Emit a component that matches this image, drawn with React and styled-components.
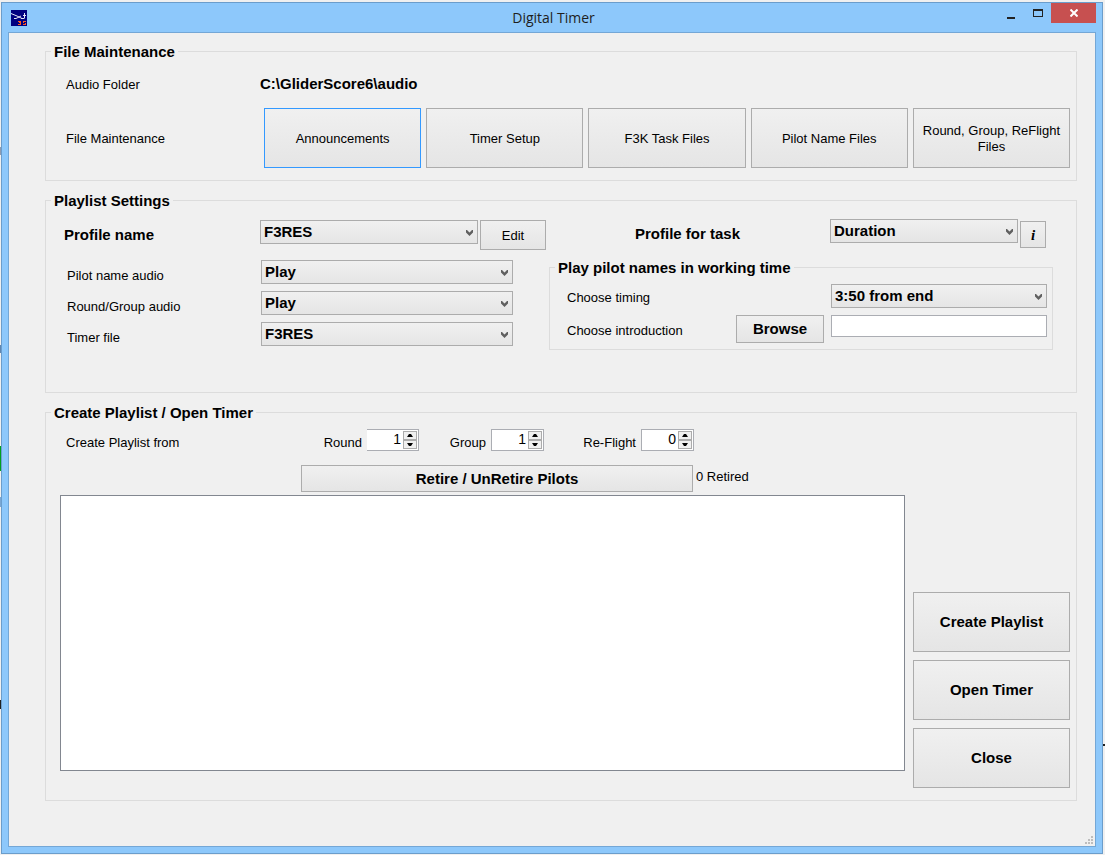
import styled, { createGlobalStyle } from 'styled-components';

const GlobalStyle = createGlobalStyle`
  *, *::before, *::after {
    box-sizing: border-box;
  }

  body {
    margin: 0;
    color: #000000;
    font-family: 'Liberation Sans', Arial, sans-serif;
    font-size: 13px;
    line-height: 16px;
  }

  button, input, select {
    margin: 0;
    font: inherit;
    color: inherit;
    border-radius: 0;
  }
`;

const Desktop = styled.div`
  display: flex;
  min-height: 100vh;
  padding: 2px 2px 1px 1px;
  background-color: #f0f0f0;
  background-image:
    linear-gradient(#00a020, #00a020),
    linear-gradient(#7aa7d4, #7aa7d4),
    linear-gradient(#202020, #202020),
    linear-gradient(#8e9bb0, #8e9bb0),
    linear-gradient(#5f86b0, #5f86b0),
    linear-gradient(#202020, #202020);
  background-size: 1px 25px, 1px 10px, 1px 9px, 1px 8px, 1px 8px, 2px 2px;
  background-position: 0 446px, 0 497px, 0 700px, 0 147px, 0 345px, 100% 744px;
  background-repeat: no-repeat;
`;

const Window = styled.main`
  flex: 1;
  display: flex;
  flex-direction: column;
  padding: 0 6px 6px;
  border: 1px solid #6b9dcb;
  background: #8dc8fb;
`;

const TitleBar = styled.header`
  display: grid;
  grid-template-columns: 1fr auto 1fr;
  align-items: center;
  height: 29px;
  padding-left: 3px;

  svg {
    display: block;
  }
`;

const Title = styled.h1`
  margin: 0;
  color: #1e1e1e;
  font-family: 'Open Sans', 'Noto Sans', sans-serif;
  font-size: 14px;
  font-weight: 400;
  line-height: 20px;
`;

const WindowControls = styled.div`
  display: flex;
  justify-content: flex-end;
  align-self: start;
`;

const ControlButton = styled.button`
  display: flex;
  align-items: center;
  justify-content: center;
  width: ${({ $close }) => ($close ? '45px' : '27px')};
  height: 20px;
  padding: 0;
  border: none;
  background: ${({ $close }) => ($close ? '#c75050' : 'transparent')};
`;

const Client = styled.div`
  position: relative;
  flex: 1;
  display: flex;
  flex-direction: column;
  gap: 12px;
  padding: 11px 18px 40px 36px;
  border: 1px solid #74a7d6;
  background: #f0f0f0;
`;

const Grip = styled.svg`
  position: absolute;
  right: 2px;
  bottom: 2px;
`;

const Group = styled.fieldset`
  min-width: 0;
  margin: 0;
  padding: 0;
  border: 1px solid #dcdcdc;
`;

const GroupTitle = styled.legend`
  margin-left: 5px;
  padding: 0 3px;
  font-size: 15px;
  font-weight: 700;
  line-height: 15px;
`;

const GroupBody = styled.div`
  padding: ${({ $padding }) => $padding};
`;

const FileGrid = styled.div`
  display: grid;
  grid-template-columns: 194px 1fr;
  row-gap: 16px;
  align-items: center;
`;

const FileLabel = styled.span`
  padding-top: 2px;
  line-height: 14px;
`;

const FolderPath = styled.strong`
  font-size: 15px;
`;

const ButtonRow = styled.div`
  display: flex;
  gap: 5px;
  padding-left: 4px;
`;

const Button = styled.button`
  flex: ${({ $width }) => ($width ? `0 1 ${$width}px` : '1 1 0')};
  min-width: 0;
  height: ${({ $height }) => $height || 60}px;
  padding: ${({ $bold }) => ($bold ? '0 4px' : '2px 4px 0')};
  border: 1px solid ${({ $focused }) => ($focused ? '#3399ff' : '#acacac')};
  background: linear-gradient(#f0f0f0, #e5e5e5);
  font-size: ${({ $bold }) => ($bold ? '15px' : '13px')};
  font-weight: ${({ $bold }) => ($bold ? 700 : 400)};
`;

const InfoButton = styled(Button)`
  align-self: flex-end;
  font-family: 'Liberation Serif', 'Times New Roman', serif;
  font-style: italic;
`;

const SettingsGrid = styled.div`
  display: grid;
  grid-template-columns: 482fr 504fr;
  column-gap: 3px;
`;

const Column = styled.div`
  display: flex;
  flex-direction: column;
  min-width: 0;
  padding-top: ${({ $top }) => $top}px;
`;

const ProfileRow = styled.div`
  display: flex;
  align-items: flex-start;
  gap: 2px;
  min-height: 29px;
  padding: ${({ $padding }) => $padding || 0};
`;

const ProfileLabel = styled.label`
  flex: 0 0 ${({ $width }) => $width}px;
  align-self: center;
  font-size: 15px;
  font-weight: 700;
`;

const FieldList = styled.div`
  display: grid;
  gap: 7px;
  margin-top: 10px;
  padding: 0 33px 0 3px;
`;

const FieldRow = styled.div`
  display: grid;
  grid-template-columns: 194px 1fr;
  align-items: center;
`;

const FieldLabel = styled.label`
  padding-top: 8px;
`;

const PilotGroup = styled(Group)`
  margin-top: 12px;
`;

const PilotRow = styled.div`
  display: flex;
  align-items: flex-start;
  gap: 7px;

  & + & {
    margin-top: 7px;
  }

  label {
    flex: 1;
    align-self: center;
    padding-top: 3px;
  }
`;

const SelectBox = styled.div`
  position: relative;
  flex: ${({ $width }) => ($width ? `0 0 ${$width}px` : '1')};
  min-width: 0;

  select {
    display: block;
    width: 100%;
    height: 24px;
    padding: 0 20px 0 3px;
    appearance: none;
    border: 1px solid #acacac;
    background: linear-gradient(#f0f0f0, #e5e5e5);
    font-size: 15px;
    font-weight: 700;
  }

  svg {
    position: absolute;
    top: 10px;
    right: 5px;
    pointer-events: none;
  }
`;

const TextBox = styled.input`
  flex: 0 0 216px;
  min-width: 0;
  height: 22px;
  padding: 0 3px;
  border: 1px solid #abadb3;
  background: #ffffff;
`;

const CounterGrid = styled.div`
  display: grid;
  grid-template-columns: 226px 97px 95px 120px;
  column-gap: 30px;
  padding-left: 20px;
`;

const Counter = styled.div`
  display: flex;
  justify-content: flex-end;
  gap: 5px;
`;

const CounterLabel = styled.span`
  padding-top: 6px;
`;

const Spinner = styled.div`
  display: flex;
  width: ${({ $open }) => ($open ? '52px' : '53px')};
  height: 22px;
  padding: 1px;
  border: 1px solid #abadb3;
  border-left-width: ${({ $open }) => ($open ? 0 : '1px')};
  background: #ffffff;

  input {
    flex: 1;
    min-width: 0;
    padding: 0 2px 2px 0;
    border: none;
    background: transparent;
    font-size: 14px;
    text-align: right;
    appearance: textfield;
  }

  input::-webkit-inner-spin-button {
    appearance: none;
    margin: 0;
  }
`;

const SpinButtons = styled.div`
  display: grid;
  grid-template-rows: 1fr 1fr;
  width: 14px;

  button {
    display: flex;
    align-items: center;
    justify-content: center;
    padding: 0;
    border: 1px solid #acacac;
    background: #f0f0f0;
  }
`;

const RetireRow = styled.div`
  display: flex;
  gap: 3px;
  margin-top: 14px;
  padding-left: 255px;
`;

const RetiredCount = styled.span`
  padding-top: 4px;
`;

const PlaylistArea = styled.div`
  display: flex;
  gap: 8px;
  margin-top: 3px;
  padding: 0 6px 0 14px;
`;

const PlaylistBox = styled.select`
  flex: 1;
  min-width: 0;
  height: 276px;
  border: 1px solid #828790;
  background: #ffffff;
`;

const Actions = styled.div`
  display: grid;
  align-content: end;
  width: 157px;
  height: 293px;
  gap: 8px;
`;

const Logo = () => (
  <svg width="16" height="16" viewBox="0 0 16 16">
    <rect width="16" height="16" fill="#000080" />
    <path d="M0 3.5L6 6l5 2.5M3 8.5h2l5-2.5M10 8.5h3.5M13.5 3v5M12 5.5h3" fill="none" stroke="#e4e4f4" />
    <g fill="#ff5a1f" shapeRendering="crispEdges">
      <path d="M7 11h3v4H7v-1h2v-1H8v-1h1v0H7z" />
      <path d="M12 11h3v1h-2v1h2v2h-3v-1h2v-1h-2z" />
    </g>
  </svg>
);

const Select = ({ id, value, width }) => (
  <SelectBox $width={width}>
    <select id={id} defaultValue={value}>
      <option>{value}</option>
    </select>
    <svg width="7" height="6" viewBox="0 0 7 6">
      <path d="M0 0h1l2.5 2.5L6 0h1v2.5L3.5 6 0 2.5z" fill="#606060" />
    </svg>
  </SelectBox>
);

const NumberField = ({ id, label, value, open }) => (
  <Counter>
    <CounterLabel as="label" htmlFor={id}>{label}</CounterLabel>
    <Spinner $open={open}>
      <input id={id} type="number" defaultValue={value} />
      <SpinButtons>
        <button type="button" aria-label={`${label} up`}>
          <svg width="6" height="3" viewBox="0 0 6 3"><path d="M2 0h2l2 3H0z" /></svg>
        </button>
        <button type="button" aria-label={`${label} down`}>
          <svg width="6" height="3" viewBox="0 0 6 3"><path d="M0 0h6L4 3H2z" /></svg>
        </button>
      </SpinButtons>
    </Spinner>
  </Counter>
);

const fileButtons = ['Announcements', 'Timer Setup', 'F3K Task Files', 'Pilot Name Files', 'Round, Group, ReFlight Files'];

const audioFields = [
  { id: 'pilot-audio', label: 'Pilot name audio', value: 'Play' },
  { id: 'round-audio', label: 'Round/Group audio', value: 'Play' },
  { id: 'timer-file', label: 'Timer file', value: 'F3RES' },
];

const App = () => (
  <>
    <GlobalStyle />
    <Desktop>
      <Window>
        <TitleBar>
          <Logo />
          <Title>Digital Timer</Title>
          <WindowControls>
            <ControlButton aria-label="Minimize">
              <svg width="8" height="14"><path d="M0 11h8v2H0z" fill="#222222" /></svg>
            </ControlButton>
            <ControlButton aria-label="Maximize">
              <svg width="10" height="8" shapeRendering="crispEdges">
                <path d="M0 0h10v8H0zM1 2v5h8V2z" fill="#222222" fillRule="evenodd" />
              </svg>
            </ControlButton>
            <ControlButton $close aria-label="Close window">
              <svg width="8" height="8" viewBox="0 0 8 8">
                <path d="M0.5 0.5l7 7M7.5 0.5l-7 7" stroke="#ffffff" strokeWidth="2" />
              </svg>
            </ControlButton>
          </WindowControls>
        </TitleBar>

        <Client>
          {/* File maintenance */}
          <Group>
            <GroupTitle>File Maintenance</GroupTitle>
            <GroupBody $padding="17px 6px 12px 20px">
              <FileGrid>
                <FileLabel>Audio Folder</FileLabel>
                <FolderPath>C:\GliderScore6\audio</FolderPath>
                <FileLabel>File Maintenance</FileLabel>
                <ButtonRow>
                  {fileButtons.map((text, i) => (
                    <Button key={text} type="button" $focused={i === 0}>{text}</Button>
                  ))}
                </ButtonRow>
              </FileGrid>
            </GroupBody>
          </Group>

          {/* Playlist settings */}
          <Group>
            <GroupTitle>Playlist Settings</GroupTitle>
            <GroupBody $padding="0 23px 42px 18px">
              <SettingsGrid>
                <Column $top={12}>
                  <ProfileRow>
                    <ProfileLabel htmlFor="profile" $width={194}>Profile name</ProfileLabel>
                    <Select id="profile" value="F3RES" />
                    <Button type="button" $width={66} $height={30}>Edit</Button>
                  </ProfileRow>
                  <FieldList>
                    {audioFields.map(({ id, label, value }) => (
                      <FieldRow key={id}>
                        <FieldLabel htmlFor={id}>{label}</FieldLabel>
                        <Select id={id} value={value} />
                      </FieldRow>
                    ))}
                  </FieldList>
                </Column>

                <Column $top={11}>
                  <ProfileRow $padding="0 7px 0 86px">
                    <ProfileLabel htmlFor="task" $width={193}>Profile for task</ProfileLabel>
                    <Select id="task" value="Duration" />
                    <InfoButton type="button" $width={26} $height={27} $bold>i</InfoButton>
                  </ProfileRow>
                  <PilotGroup>
                    <GroupTitle>Play pilot names in working time</GroupTitle>
                    <GroupBody $padding="9px 5px 6px 17px">
                      <PilotRow>
                        <label htmlFor="timing">Choose timing</label>
                        <Select id="timing" value="3:50 from end" width={216} />
                      </PilotRow>
                      <PilotRow>
                        <label htmlFor="intro">Choose introduction</label>
                        <Button type="button" $width={88} $height={28} $bold>Browse</Button>
                        <TextBox id="intro" type="text" />
                      </PilotRow>
                    </GroupBody>
                  </PilotGroup>
                </Column>
              </SettingsGrid>
            </GroupBody>
          </Group>

          {/* Playlist creation */}
          <Group>
            <GroupTitle>Create Playlist / Open Timer</GroupTitle>
            <GroupBody $padding="9px 0 12px">
              <CounterGrid>
                <CounterLabel>Create Playlist from</CounterLabel>
                <NumberField id="round" label="Round" value={1} open />
                <NumberField id="group" label="Group" value={1} />
                <NumberField id="reflight" label="Re-Flight" value={0} />
              </CounterGrid>
              <RetireRow>
                <Button type="button" $width={392} $height={27} $bold>Retire / UnRetire Pilots</Button>
                <RetiredCount>0 Retired</RetiredCount>
              </RetireRow>
              <PlaylistArea>
                <PlaylistBox size={10} aria-label="Playlist" />
                <Actions>
                  <Button type="button" $bold>Create Playlist</Button>
                  <Button type="button" $bold>Open Timer</Button>
                  <Button type="button" $bold>Close</Button>
                </Actions>
              </PlaylistArea>
            </GroupBody>
          </Group>

          <Grip width="8" height="8" shapeRendering="crispEdges">
            <path d="M6 0h2v2h-2zM3 3h2v2h-2zM6 3h2v2h-2zM0 6h2v2h-2zM3 6h2v2h-2zM6 6h2v2h-2z" fill="#bdbdbd" />
          </Grip>
        </Client>
      </Window>
    </Desktop>
  </>
);

export default App;
